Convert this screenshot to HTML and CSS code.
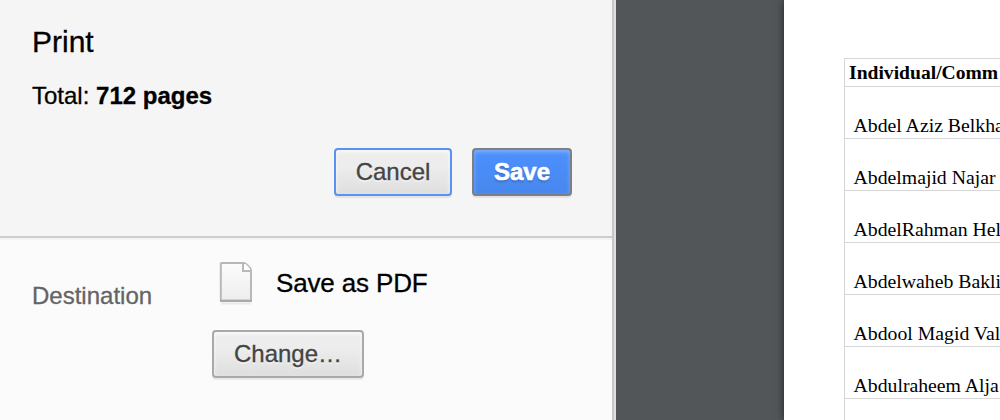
FILE: index.html
```html
<!DOCTYPE html>
<html lang="en">
<head>
  <meta charset="utf-8">
  <title>Print</title>
  <link rel="stylesheet" href="styles.css">
</head>
<body>
  <div class="print-preview">
    <div class="sidebar">
      <div class="header">
        <h1>Print</h1>
        <p class="summary">Total: <b>712 pages</b></p>
        <div class="button-strip">
          <button class="cancel">Cancel</button>
          <button class="save">Save</button>
        </div>
      </div>
      <div class="settings">
        <h2>Destination</h2>
        <div class="destination">
          <div class="destination-name">
            <svg class="icon" width="36" height="46" viewBox="0 0 36 46">
              <defs>
                <linearGradient id="paper" x1="0" y1="0" x2="0" y2="1">
                  <stop offset="0" stop-color="#fcfcfc"/>
                  <stop offset="1" stop-color="#ededed"/>
                </linearGradient>
              </defs>
              <path d="M3 43.5h30" stroke="#e9e9e9" stroke-width="2"/>
              <path d="M3.500 3h21.500q2 0 3 1l4 4q1 1 1 3v29.500H2.800V3.500z" fill="url(#paper)" stroke="#b8b8b8" stroke-width="2" stroke-linejoin="round"/>
              <path d="M25 3v8h8" fill="none" stroke="#b8b8b8" stroke-width="2"/>
              <path d="M26 4h1.500l4.500 4.500v1.500h-6z" fill="#fff"/>
              <path d="M2 41h32" stroke="#a9a9a9" stroke-width="2"/>
            </svg>
            <span>Save as PDF</span>
          </div>
          <button class="change">Change…</button>
        </div>
      </div>
    </div>
    <div class="preview">
      <div class="page">
        <table>
          <tr><th>Individual/Comm</th></tr>
          <tr><td>Abdel Aziz Belkha</td></tr>
          <tr><td>Abdelmajid Najar</td></tr>
          <tr><td>AbdelRahman Hel</td></tr>
          <tr><td>Abdelwaheb Bakli</td></tr>
          <tr><td>Abdool Magid Val</td></tr>
          <tr><td>Abdulraheem Alja</td></tr>
          <tr><td></td></tr>
        </table>
      </div>
    </div>
  </div>
</body>
</html>
```

FILE: styles.css
```css
* {
  box-sizing: border-box;
  margin: 0;
  padding: 0;
}
body {
  font-family: "Liberation Sans", Arial, sans-serif;
  font-size: 24px;
  color: #000;
  overflow: hidden;
}
.print-preview {
  display: flex;
  height: 420px;
  overflow: hidden;
}
.sidebar {
  flex: none;
  width: 616px;
  background-color: #fbfbfb;
  border-right: 2px solid #dedfdf;
  box-shadow: inset -2px 0 0 #c6c7c8;
  padding-right: 2px;
  -webkit-text-stroke: 0.3px;
}
.header {
  height: 238px;
  background-color: #f5f5f5;
  border-bottom: 2px solid #cdcdcd;
  box-shadow: 0 2px 0 #f3f3f3;
  padding: 24px 40px 0 32px;
}
h1 {
  font-size: 30px;
  font-weight: normal;
  line-height: 36px;
}
.summary {
  line-height: 28px;
  margin-top: 22px;
}
.button-strip {
  display: flex;
  justify-content: flex-end;
  gap: 20px;
  margin-top: 38px;
}
button {
  height: 48px;
  border: 2px solid #a9a9a9;
  border-radius: 4px;
  background-image: linear-gradient(#ededed, #ededed 38%, #dedede);
  box-shadow: 0 2px 0 rgba(0, 0, 0, 0.07), inset 0 2px 4px rgba(255, 255, 255, 0.75);
  color: #444;
  font-family: inherit;
  font-size: 24px;
  line-height: 44px;
  text-shadow: 0 2px 0 #f0f0f0;
  -webkit-text-stroke: 0.3px;
}
.cancel {
  width: 118px;
  border-color: #5a92ef;
}
.save {
  width: 100px;
  border-color: #7c8085;
  background-image: linear-gradient(#4d90fe, #4787ed);
  box-shadow: 0 2px 0 rgba(0, 0, 0, 0.07), inset 0 2px 4px rgba(255, 255, 255, 0.3);
  color: #fff;
  font-weight: bold;
  text-shadow: 0 2px 2px rgba(0, 0, 0, 0.2);
  -webkit-text-stroke: 0.6px;
}
.settings {
  display: flex;
  padding: 22px 0 0 32px;
}
h2 {
  width: 180px;
  color: #646464;
  font-size: 24px;
  font-weight: normal;
  line-height: 28px;
  margin-top: 22px;
}
.destination-name {
  display: flex;
  align-items: center;
  gap: 22px;
  height: 46px;
  margin-left: 6px;
  font-size: 26px;
  letter-spacing: -0.15px;
}
.change {
  width: 152px;
  margin-top: 24px;
}
.preview {
  flex: 1;
  background-color: #525659;
  padding-left: 168px;
  overflow: hidden;
}
.page {
  width: 800px;
  height: 420px;
  background-color: #fff;
  box-shadow: 0 0 8px rgba(0, 0, 0, 0.6);
  padding: 58px 0 0 60px;
}
table {
  width: 700px;
  border-collapse: separate;
  border-spacing: 0;
  border-top: 1px solid #d6d6d6;
  border-left: 1px solid #d6d6d6;
  font-family: "Liberation Serif", "Times New Roman", serif;
  font-size: 19.75px;
  line-height: 22px;
}
th, td {
  border-bottom: 1px solid #d6d6d6;
  text-align: left;
  vertical-align: bottom;
  white-space: nowrap;
}
th {
  height: 28px;
  padding: 0 4px 2px;
  font-size: 19.6px;
}
td {
  height: 52px;
  padding: 0 8px 2px 8.5px;
}
```
